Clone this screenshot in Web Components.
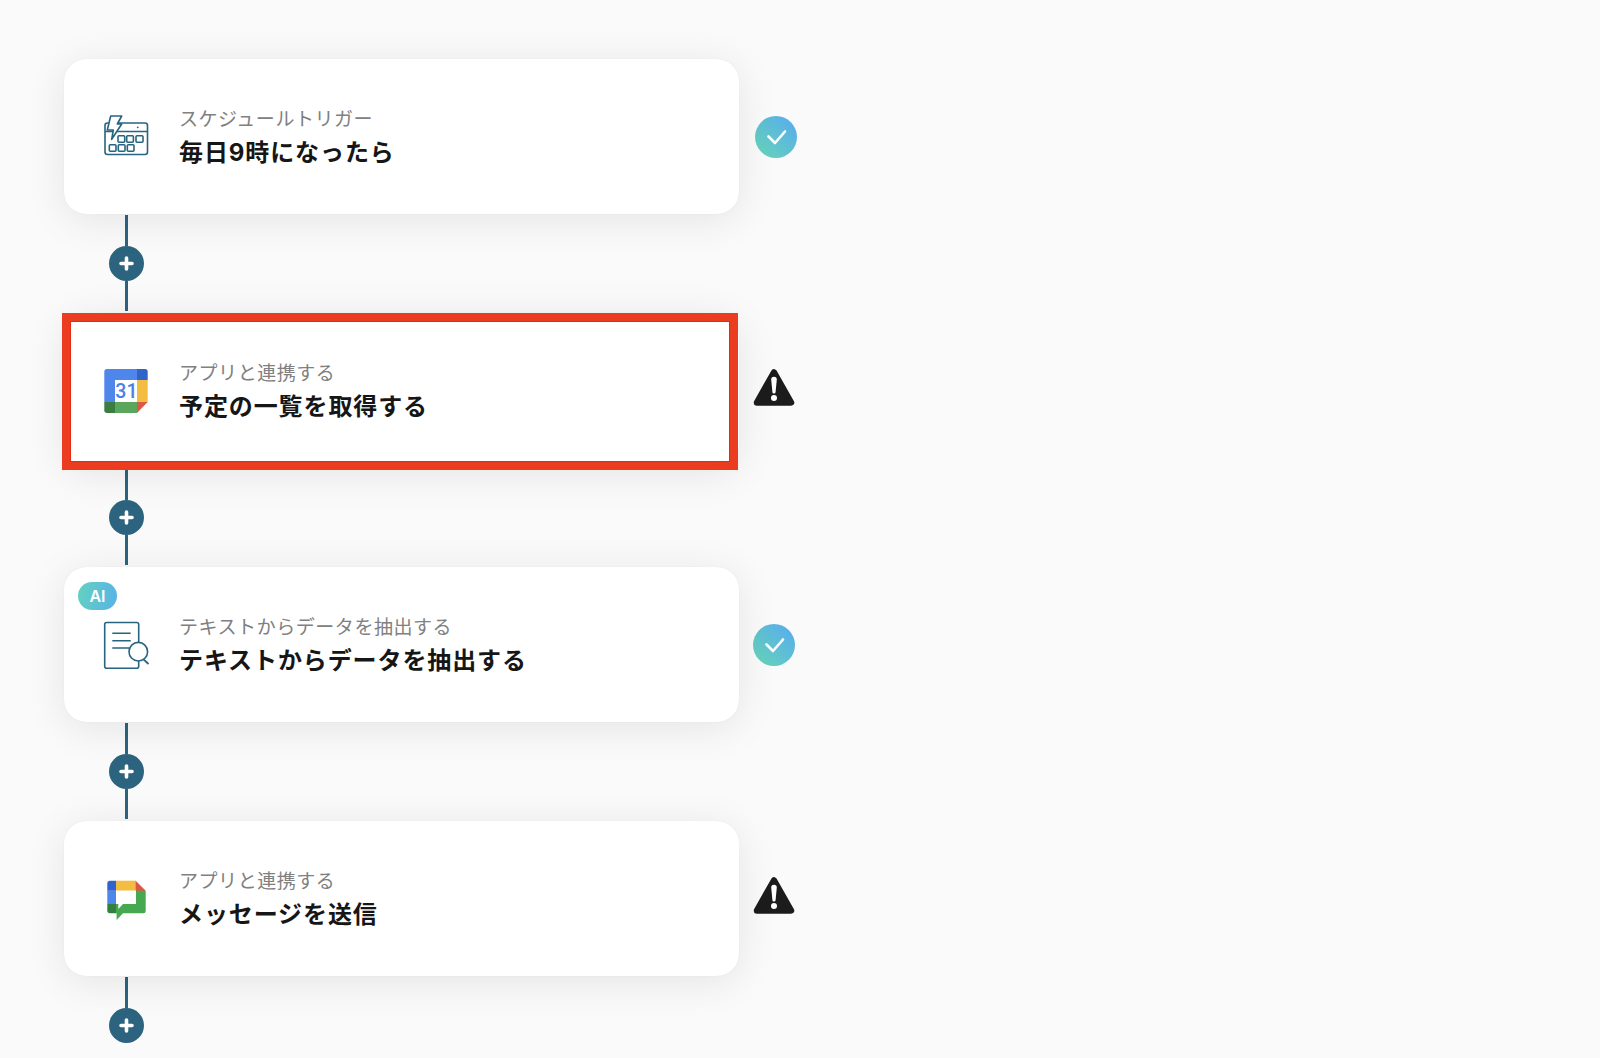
<!DOCTYPE html>
<html lang="ja"><head><meta charset="utf-8"><title>Flow</title>
<style>
html,body{margin:0;height:100%;overflow:hidden}
body{background:#fafafa;font-family:Inter,"Noto Sans CJK JP",sans-serif}
</style></head><body>
<flow-page>
<flow-step label="スケジュールトリガー" title-text="毎日9時になったら" icon="schedule" status="ok" status-gap="16"></flow-step>
<flow-connector></flow-connector>
<flow-step label="アプリと連携する" title-text="予定の一覧を取得する" icon="gcal" status="warn" status-gap="14" highlight></flow-step>
<flow-connector></flow-connector>
<flow-step label="テキストからデータを抽出する" title-text="テキストからデータを抽出する" icon="doc" status="ok" status-gap="14" ai></flow-step>
<flow-connector></flow-connector>
<flow-step label="アプリと連携する" title-text="メッセージを送信" icon="gchat" status="warn" status-gap="14"></flow-step>
<flow-connector last></flow-connector>
</flow-page>
<script>
class FlowPage extends HTMLElement{constructor(){super();this.attachShadow({mode:'open'}).innerHTML=`<style>:host{display:flex;flex-direction:column;align-items:flex-start;padding:59px 0 0 64px}</style><slot></slot>`}}
class FlowConnector extends HTMLElement{constructor(){super();this.attachShadow({mode:'open'}).innerHTML=`<style>
:host{display:flex;flex-direction:column;align-items:center;width:35px;height:99px;margin-left:44.5px;padding:1px 0 2px;box-sizing:border-box}
.s{width:3px;background:#2c6480}.a{height:31px}.b{flex:1}
.c{width:35px;height:35px;border-radius:50%;background:#2c6480;display:flex;align-items:center;justify-content:center;flex:none}
:host([last]) .b{display:none}
</style><div class="s a"></div><div class="c"><svg width="17" height="17" viewBox="0 0 17 17"><path d="M8.5 3v11M3 8.5h11" stroke="#fff" stroke-width="3.6" stroke-linecap="round"/></svg></div><div class="s b"></div>`}}
const S='#27647f';
const ICONS={
schedule:`<svg class="i" viewBox="0 0 48 48" fill="none" stroke="${S}" stroke-width="1.6">
<rect x="3" y="11" width="42.5" height="31.5" rx="2.5"/><path d="M3 19.5h42.5"/>
<path d="M8.7 4H19.7L15.3 12H19.7L9.7 27.3 11.3 18H5.3Z" fill="#fff" stroke-linejoin="round"/>
<circle cx="35.7" cy="15.3" r=".9" fill="${S}" stroke="none"/>
<g><rect x="16" y="23.7" width="6.7" height="6.6" rx="1"/><rect x="24.7" y="23.7" width="6.7" height="6.6" rx="1"/><rect x="34" y="23.7" width="7" height="6.6" rx="1"/>
<rect x="7.3" y="32.7" width="6.7" height="6.6" rx="1"/><rect x="16.3" y="32.7" width="6.7" height="6.6" rx="1"/><rect x="25.3" y="32.7" width="6.7" height="6.6" rx="1"/></g></svg>`,
gcal:`<svg class="i" viewBox="0 0 48 48">
<path d="M5 3H35V14H13V36H2.3V5.7A2.7 2.7 0 0 1 5 3Z" fill="#4f86ec"/>
<path d="M35 3H43A2.7 2.7 0 0 1 45.7 5.7V14H35Z" fill="#2f64c9"/>
<rect x="35" y="14" width="10.7" height="22.5" fill="#f3bd42"/>
<rect x="13" y="36" width="22" height="11" fill="#5aa65c"/>
<path d="M2.3 36H13V47H5A2.7 2.7 0 0 1 2.3 44.3Z" fill="#3b7d40"/>
<path d="M35 36H45.7L35 47Z" fill="#dd5844"/>
<rect x="13" y="14" width="22" height="22" fill="#fff"/>
<text x="24.4" y="32.3" text-anchor="middle" font-family="Roboto,sans-serif" font-size="19.5" font-weight="500" fill="#4a80e8">31</text></svg>`,
doc:`<svg class="i" viewBox="0 0 48 48" fill="none" stroke="${S}" stroke-width="1.6" style="overflow:visible">
<rect x="2.7" y="2.5" width="34" height="45.8" rx="2"/>
<path d="M10.3 13.3H28.7M10.3 20.7H28.7M10.3 28H27"/>
<circle cx="36.3" cy="31.7" r="9.3" fill="#fff"/><path d="M41.5 39.3L46.5 44" stroke-width="1.8"/></svg>`,
gchat:`<svg class="i" viewBox="0 0 48 48">
<path d="M32 6.7L43.7 17V37A2.3 2.3 0 0 1 41.4 39.3H21L14.6 46V39.3H14V30H34V16.7Z" fill="#46a850"/>
<path d="M14 30V39.3H8A2.7 2.7 0 0 1 5.3 36.6V30Z" fill="#337f3d"/>
<rect x="5.3" y="16.7" width="8.7" height="13.3" fill="#4f86ec"/>
<path d="M8 6.7H14V16.7H5.3V9.4A2.7 2.7 0 0 1 8 6.7Z" fill="#2f64d0"/>
<rect x="14" y="6.7" width="20" height="10" fill="#f3bd42"/>
<path d="M33.7 6.7L43.7 16.7H33.7Z" fill="#dd5844"/>
<path d="M14 16.7H34V30H21L16.3 35V30H14Z" fill="#fff"/></svg>`};
const STATUS={
ok:`<svg width="42" height="42" viewBox="0 0 42 42" style="margin-top:1px"><defs><linearGradient id="g" x1="0" y1="1" x2="1" y2="0"><stop offset="0.1" stop-color="#66d2bc"/><stop offset="0.9" stop-color="#58aeea"/></linearGradient></defs><circle cx="21" cy="21" r="21" fill="url(#g)"/><path d="M13.5 20.5L20 27 30 15.5" fill="none" stroke="#fff" stroke-width="2.6" stroke-linecap="round" stroke-linejoin="round"/></svg>`,
warn:`<svg width="42" height="38" viewBox="0 0 42 38" style="margin-top:-5px"><path d="M21 3.5L38 33.5H4Z" fill="#1c1c1c" stroke="#1c1c1c" stroke-width="6.5" stroke-linejoin="round"/><path d="M18.2 10.5a2.8 2.8 0 0 1 5.6 0L22.6 23a1.6 1.6 0 0 1-3.2 0Z" fill="#fff"/><circle cx="21" cy="29" r="3" fill="#fff"/></svg>`};
class FlowStep extends HTMLElement{constructor(){super();const r=this.attachShadow({mode:'open'});
const a=n=>this.getAttribute(n)||'';
r.innerHTML=`<style>
:host{display:flex;align-items:center}
.card{position:relative;box-sizing:border-box;width:675px;height:155px;background:#fff;border-radius:22px;padding-left:38px;display:flex;align-items:center;gap:29px;box-shadow:0 0 1px rgba(0,0,0,.1),0 6px 40px rgba(0,0,0,.09)}
.i{width:48px;height:48px;display:block;flex:none;margin-top:-1px}
.t{display:flex;flex-direction:column;margin-top:3px}
.l{font-size:19px;line-height:28px;letter-spacing:.55px;color:#808080;white-space:nowrap}
.h{font-size:24px;line-height:34px;margin-top:2px;font-weight:700;letter-spacing:.9px;color:#161616;white-space:nowrap}
.ai{position:absolute;left:14px;top:15px;width:39px;height:28px;border-radius:14px;background:linear-gradient(100deg,#63d2c0,#58b2e6);color:#fff;font:600 16px/28px Inter,sans-serif;text-align:center}
.frame{position:absolute;left:-2px;right:1px;top:0;bottom:-2px;border:8px solid #ec3c20;box-shadow:inset 0 0 0 1px #e42a10}
.st{margin-left:${a('status-gap')}px;display:flex}
</style><div class="card">${this.hasAttribute('ai')?'<div class="ai">AI</div>':''}${ICONS[a('icon')]}<div class="t"><div class="l">${a('label')}</div><div class="h">${a('title-text')}</div></div>${this.hasAttribute('highlight')?'<div class="frame"></div>':''}</div><div class="st">${STATUS[a('status')]}</div>`}}
customElements.define('flow-page',FlowPage);
customElements.define('flow-connector',FlowConnector);
customElements.define('flow-step',FlowStep);
</script>
</body></html>
